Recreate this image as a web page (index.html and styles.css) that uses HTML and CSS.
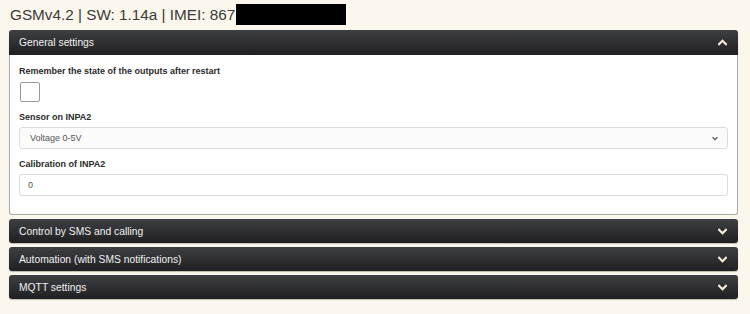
FILE: index.html
```html
<!DOCTYPE html>
<html>
<head>
<meta charset="utf-8">
<link rel="stylesheet" href="styles.css">
</head>
<body>
<h1 class="title">GSMv4.2 | SW: 1.14a | IMEI: 867<span class="redact"></span></h1>
<div class="panels">
  <section class="panel open">
    <div class="head"><span>General settings</span><svg class="chev" viewBox="0 0 10 8"><path d="M1 6 L5 2 L9 6" /></svg></div>
    <div class="body">
      <label class="lbl">Remember the state of the outputs after restart</label>
      <div class="check"></div>
      <label class="lbl">Sensor on INPA2</label>
      <div class="field select"><span>Voltage 0-5V</span><svg class="sel-chev" viewBox="0 0 10 8"><path d="M2 2.5 L5 5.5 L8 2.5" /></svg></div>
      <label class="lbl">Calibration of INPA2</label>
      <div class="field"><span>0</span></div>
    </div>
  </section>
  <section class="panel">
    <div class="head"><span>Control by SMS and calling</span><svg class="chev" viewBox="0 0 10 8"><path d="M1 2 L5 6 L9 2" /></svg></div>
  </section>
  <section class="panel">
    <div class="head"><span>Automation (with SMS notifications)</span><svg class="chev" viewBox="0 0 10 8"><path d="M1 2 L5 6 L9 2" /></svg></div>
  </section>
  <section class="panel">
    <div class="head"><span>MQTT settings</span><svg class="chev" viewBox="0 0 10 8"><path d="M1 2 L5 6 L9 2" /></svg></div>
  </section>
</div>
</body>
</html>
```
FILE: styles.css
```css
html, body { margin: 0; padding: 0; }
body {
  background: #fcf7ec;
  font-family: "Liberation Sans", Arial, sans-serif;
  width: 750px;
  height: 314px;
  overflow: hidden;
}
.title {
  margin: 0;
  padding: 4px 0 0 10px;
  height: 26px;
  box-sizing: border-box;
  font-size: 15.3px;
  font-weight: normal;
  color: #3a3a3a;
  display: flex;
  align-items: flex-start;
  line-height: 21px;
}
.redact {
  display: inline-block;
  width: 110px;
  height: 21px;
  background: #000;
  margin-left: 1px;
}
.panels {
  margin: 4px 12px 0 9px;
  display: flex;
  flex-direction: column;
  gap: 4px;
}
.panel { border-radius: 4px; }
.head {
  height: 24px;
  box-sizing: border-box;
  padding: 0 11px 0 10px;
  display: flex;
  align-items: center;
  justify-content: space-between;
  background: linear-gradient(#3e3f43, #202022);
  color: #f0f0f0;
  font-size: 10.3px;
  border-radius: 3px;
  box-shadow: 0 1px 1px rgba(0,0,0,0.25);
}
.open .head { height: 25px; border-radius: 3px 3px 0 0; }
.chev { width: 9px; height: 7px; }
.chev path { fill: none; stroke: #f6ecd8; stroke-width: 2.6; stroke-linecap: square; }
.body {
  background: #fff;
  border: 1px solid #a9a9a9;
  border-top: none;
  border-radius: 0 0 3px 3px;
  padding: 11px 9px 18px 9px;
  display: flex;
  flex-direction: column;
}
.lbl {
  font-size: 9px;
  font-weight: bold;
  color: #2a2a2a;
  line-height: 11px;
  display: block;
}
.check {
  margin: 5px 0 10px 1px;
  width: 18px;
  height: 18px;
  border: 1px solid #9a9a9a;
  border-radius: 2px;
  background: #fff;
}
.field {
  margin: 4px 0 10px 0;
  height: 22px;
  box-sizing: border-box;
  border: 1px solid #dcdcdc;
  border-radius: 3px;
  background: #fff;
  font-size: 9px;
  color: #555;
  display: flex;
  align-items: center;
  justify-content: space-between;
  padding: 0 8px 0 8px;
}
.field:last-child { margin-bottom: 0; }
.select { background: #fbfbfb; padding-left: 10px; }
.sel-chev { width: 8px; height: 7px; }
.sel-chev path { fill: none; stroke: #555; stroke-width: 1.6; }
```
